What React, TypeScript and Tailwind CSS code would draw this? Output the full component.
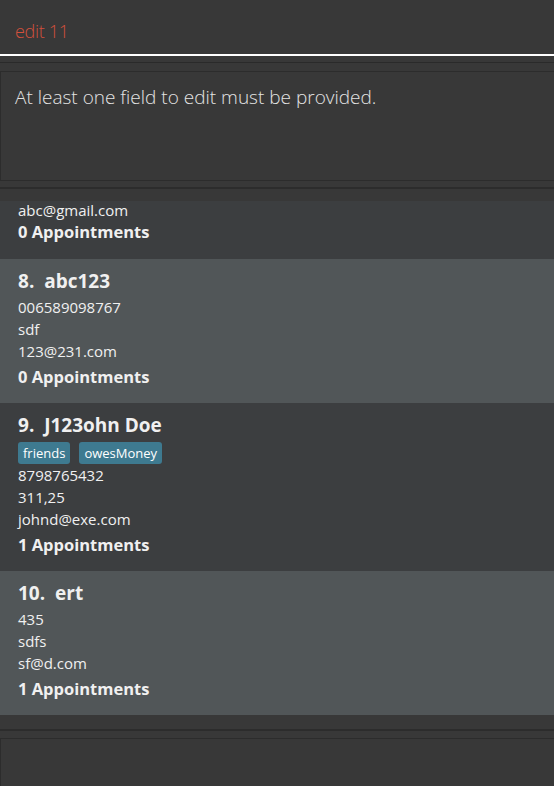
type Person = {
  index: number;
  name: string;
  tags: string[];
  phone: string;
  address: string;
  email: string;
  appointments: number;
};

const people: Person[] = [
  { index: 8, name: 'abc123', tags: [], phone: '006589098767', address: 'sdf', email: '123@231.com', appointments: 0 },
  { index: 9, name: 'J123ohn Doe', tags: ['friends', 'owesMoney'], phone: '8798765432', address: '311,25', email: 'johnd@exe.com', appointments: 1 },
  { index: 10, name: 'ert', tags: [], phone: '435', address: 'sdfs', email: 'sf@d.com', appointments: 1 },
];

const font = { fontFamily: '"Open Sans", "Noto Sans", sans-serif' };

export default function App() {
  return (
    <div className="flex h-[786px] w-[554px] flex-col overflow-hidden bg-[#383838]" style={font}>
      {/* Command box */}
      <div className="flex h-[56px] items-center border-b-2 border-white px-[15px] pt-[9px]">
        <span className="text-[18px] font-light tracking-[-0.3px] text-[#d2503c]">edit 11</span>
      </div>

      {/* Result display */}
      <div className="mt-[6px] h-[9px] border-t border-[#2a2a2a]" />
      <div className="h-[110px] border-y border-l border-[#2c2c2c] px-[14px] pt-[10px]">
        <p className="text-[19px] leading-[30px] font-light text-[#e4e4e4]">At least one field to edit must be provided.</p>
      </div>
      <div className="mt-[6px] h-[14px] border-t-2 border-[#2c2c2c]" />

      {/* Person list */}
      <div className="h-[514px] overflow-hidden">
        <div className="bg-[#3c3e40] px-[18px] pb-[14px] text-[#f0f0f0]">
          <div className="text-[15px] leading-[18px]">abc@gmail.com</div>
          <div className="text-[16.5px] leading-[26px] font-bold">0 Appointments</div>
        </div>
        {people.map((p, i) => (
          <PersonCard key={p.index} person={p} light={i % 2 === 0} />
        ))}
      </div>

      {/* Status bar */}
      <div className="h-[14px]" />
      <div className="h-[9px] border-t-2 border-[#2c2c2c]" />
      <div className="flex-1 border-t border-l border-[#2c2c2c]" />
    </div>
  );
}

function PersonCard({ person, light }: { person: Person; light: boolean }) {
  return (
    <div className={`${light ? 'bg-[#515658]' : 'bg-[#3c3e40]'} px-[18px] pt-[10px] pb-[13px] text-[#f0f0f0]`}>
      <div className="text-[19px] leading-[24px] font-bold">
        {person.index}.&nbsp;&nbsp;{person.name}
      </div>
      {person.tags.length > 0 ? (
        <div className="mt-[5px] flex gap-[9px]">
          {person.tags.map((t) => (
            <span key={t} className="h-[22px] rounded-[3px] bg-[#3e7a90] px-[5px] text-[13px] leading-[22px] text-white">
              {t}
            </span>
          ))}
        </div>
      ) : (
        <div className="h-[3px]" />
      )}
      <div className="text-[15px] leading-[22px]">{person.phone}</div>
      <div className="text-[15px] leading-[22px]">{person.address}</div>
      <div className="text-[15px] leading-[22px]">{person.email}</div>
      <div className="mt-[2px] text-[16.5px] leading-[26px] font-bold">{person.appointments} Appointments</div>
    </div>
  );
}
